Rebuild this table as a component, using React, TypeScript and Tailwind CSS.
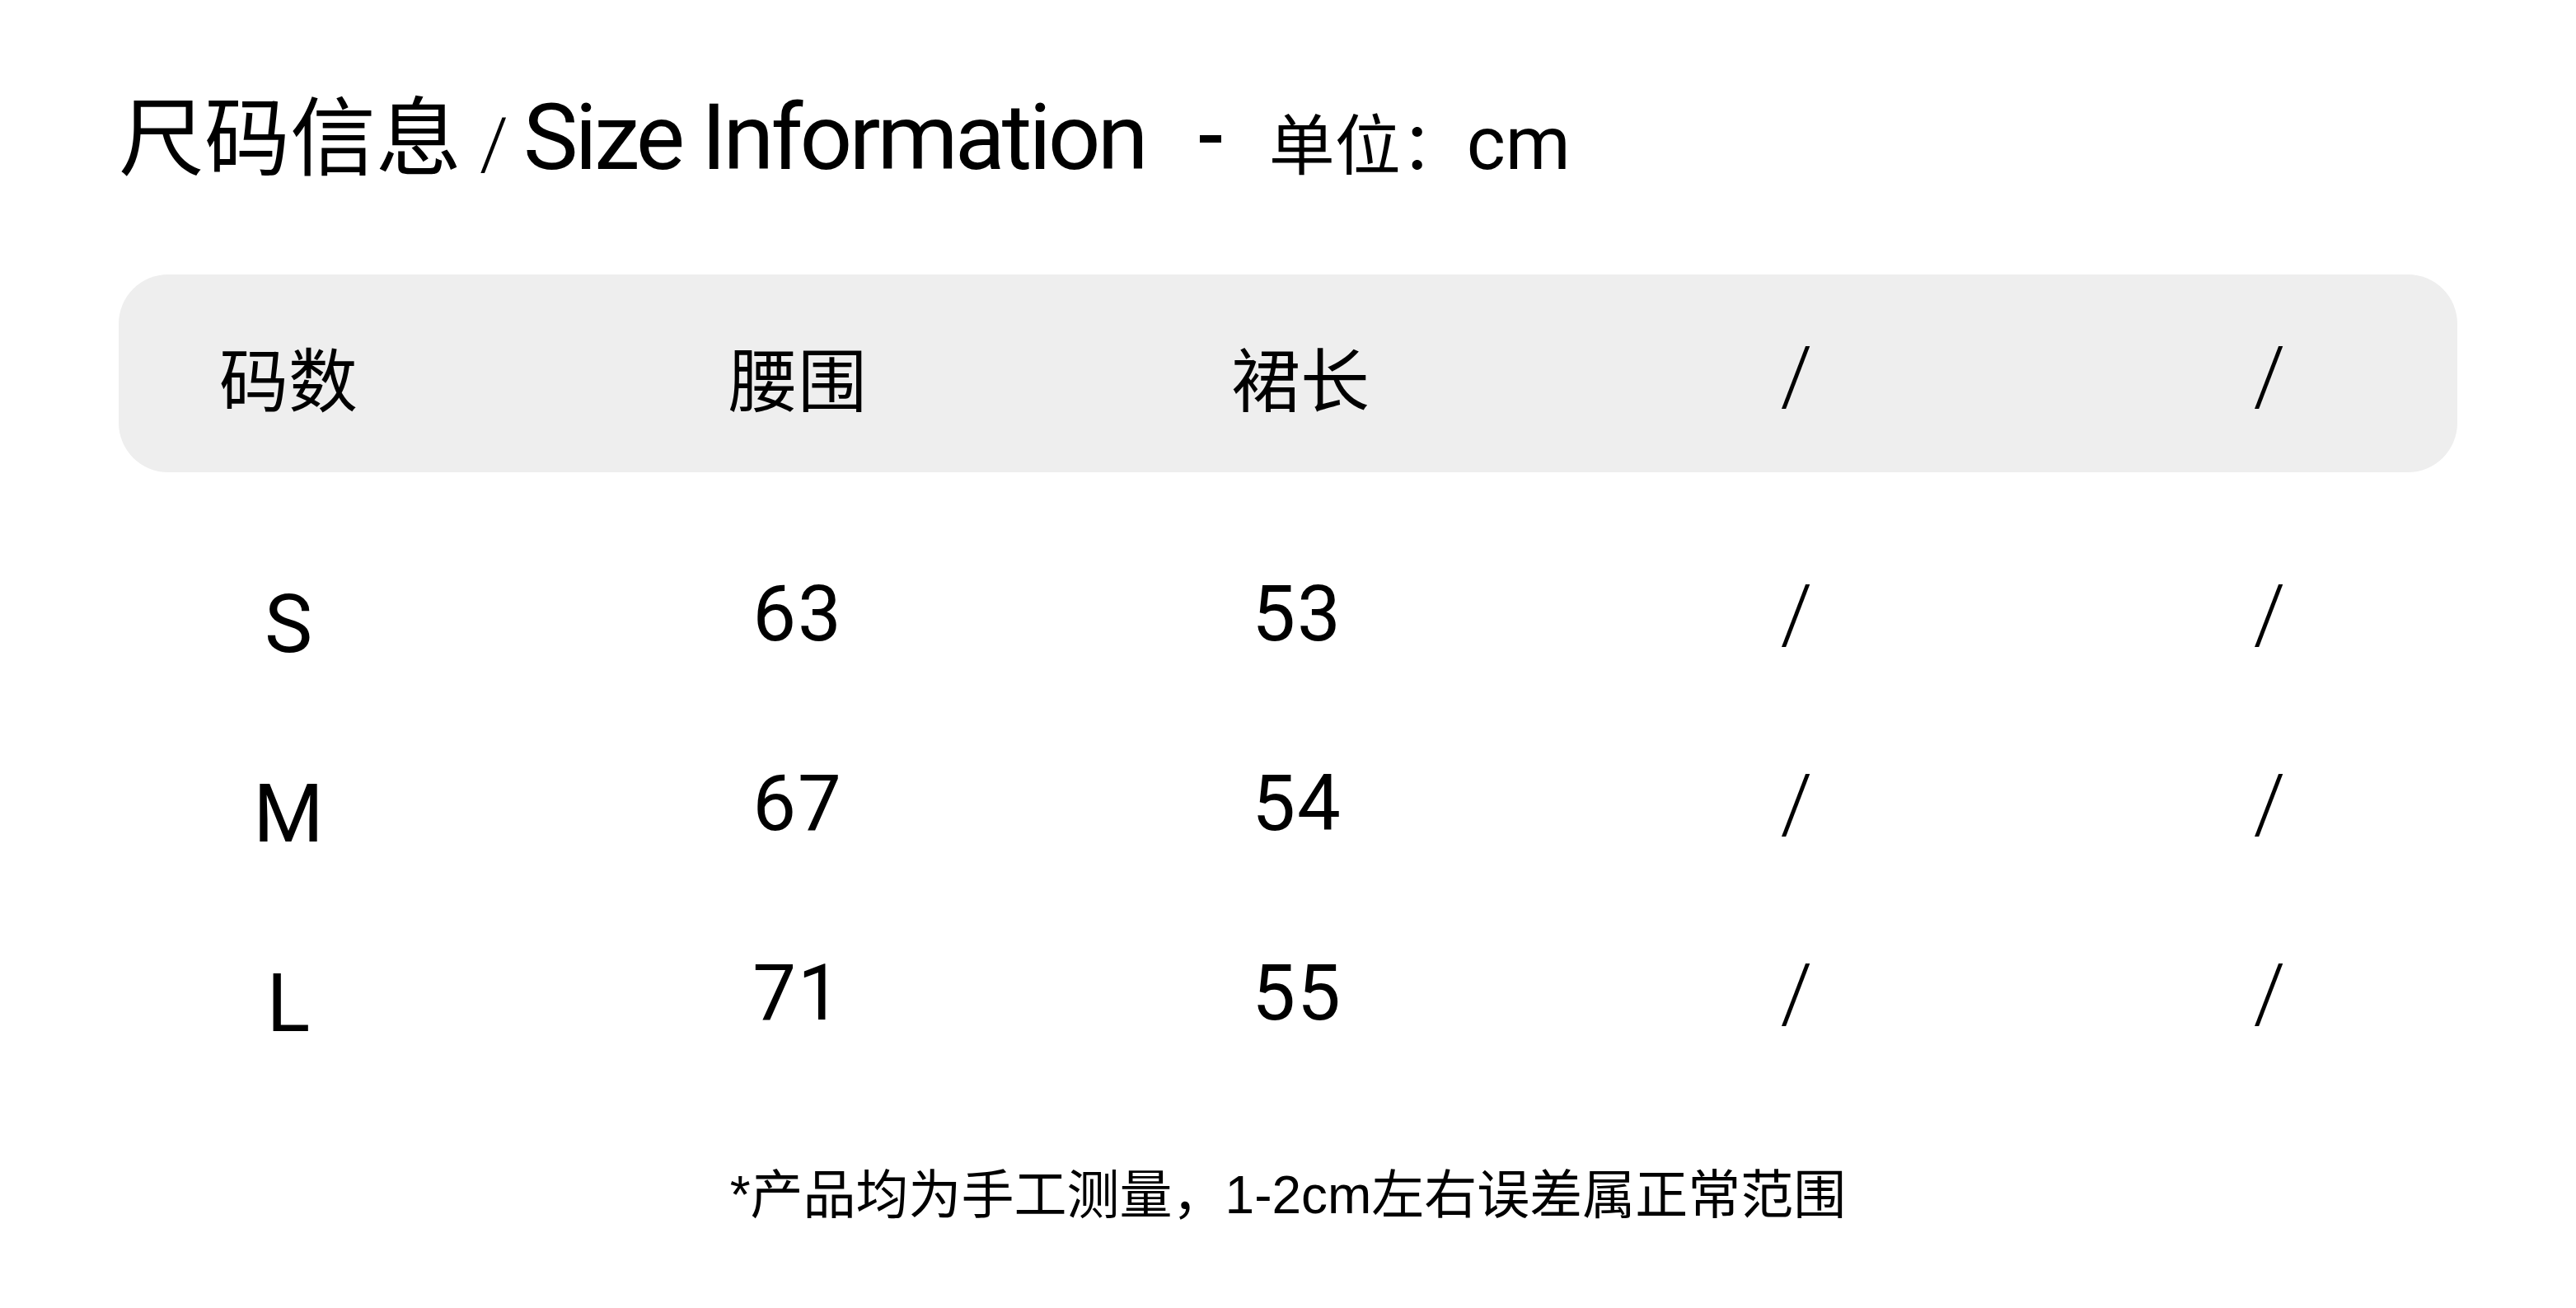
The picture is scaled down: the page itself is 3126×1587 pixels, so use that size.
const rows = [
  { size: 'S', waist: '63', length: '53' },
  { size: 'M', waist: '67', length: '54' },
  { size: 'L', waist: '71', length: '55' },
];

const headers = ['码数', '腰围', '裙长', '/', '/'];

// left offsets so each 400px cell is centred on its column (350, 968, 1578, 2180, 2754)
const colGap = ['ml-[6px]', 'ml-[218px]', 'ml-[210px]', 'ml-[202px]', 'ml-[174px]'];

export default function App() {
  return (
    <div className="h-[1587px] w-[3126px] overflow-hidden bg-white text-black font-['Roboto','Noto_Sans_CJK_SC',sans-serif]">
      {/* title */}
      <div className="flex items-baseline pl-[144px] pt-[108px] leading-none">
        <span className="text-[104px] font-['Noto_Sans_CJK_SC',sans-serif]">尺码信息</span>
        <span className="ml-[22px] text-[88px] font-light">/</span>
        <span className="ml-[18px] text-[112px] tracking-[-0.035em]">Size Information</span>
        <span className="ml-[66px] inline-block h-[9px] w-[26px] -translate-y-[32px] bg-black" />
        <span className="ml-[58px] text-[80px] font-['Noto_Sans_CJK_SC',sans-serif]">单位：</span>
        <span className="text-[90px]">cm</span>
      </div>

      {/* header bar */}
      <div className="mx-[144px] mt-[110px] flex h-[240px] items-center rounded-[60px] bg-[#eeeeee]">
        {headers.map((h, i) => (
          <div key={i} className={`${colGap[i]} w-[400px] shrink-0 pt-[8px] text-center text-[84px] leading-none font-['Noto_Sans_CJK_SC',sans-serif]`}>
            {h === '/' ? <span className="font-['Roboto',sans-serif] text-[98px] font-light">/</span> : h}
          </div>
        ))}
      </div>

      {/* rows */}
      <div className="mx-[144px] mt-[57px]">
        {rows.map(r => (
          <div key={r.size} className="flex h-[230px] items-center leading-none">
            <div className={`${colGap[0]} w-[400px] shrink-0 pt-[26px] text-center text-[98px]`}>{r.size}</div>
            <div className={`${colGap[1]} w-[400px] shrink-0 text-center text-[94px] tracking-[0.02em]`}>{r.waist}</div>
            <div className={`${colGap[2]} -translate-x-[4px] w-[400px] shrink-0 text-center text-[94px] tracking-[0.02em]`}>{r.length}</div>
            <div className={`${colGap[3]} w-[400px] shrink-0 pt-[2px] text-center text-[98px] font-light`}>/</div>
            <div className={`${colGap[4]} w-[400px] shrink-0 pt-[2px] text-center text-[98px] font-light`}>/</div>
          </div>
        ))}
      </div>

      {/* note */}
      <p className="mt-[98px] text-center text-[64px] leading-none font-['Liberation_Sans','Noto_Sans_CJK_SC',sans-serif]">
        *产品均为手工测量，1-2cm左右误差属正常范围
      </p>
    </div>
  );
}
